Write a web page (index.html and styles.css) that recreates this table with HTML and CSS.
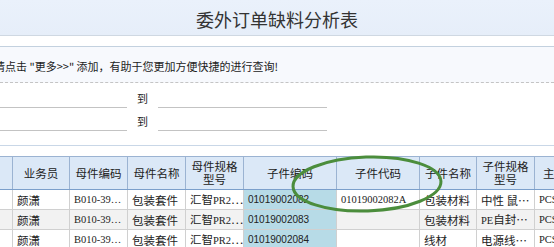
FILE: index.html
```html
<!DOCTYPE html>
<html>
<head>
<meta charset="utf-8">
<link rel="stylesheet" href="styles.css">
</head>
<body>
<div class="page">
  <header class="titlebar"><h1 class="title">委外订单缺料分析表</h1></header>
  <div class="gap"></div>
  <div class="hint"><span class="hint-text">请点击 "更多&gt;&gt;" 添加，有助于您更加方便快捷的进行查询!</span></div>
  <div class="filters">
    <div class="frow"><span class="inp"></span><span class="to">到</span><span class="inp inp-r"></span></div>
    <div class="frow"><span class="inp"></span><span class="to">到</span><span class="inp inp-r"></span></div>
  </div>
  <div class="grid-wrap">
    <table class="grid">
      <colgroup>
        <col style="width:52px"><col style="width:57px"><col style="width:58px"><col style="width:58px"><col style="width:58px"><col style="width:93px"><col style="width:83px"><col style="width:57px"><col style="width:58px"><col style="width:70px">
      </colgroup>
      <thead>
        <tr><th></th><th>业务员</th><th>母件编码</th><th>母件名称</th><th class="two"><span class="ln">母件规格</span><span class="ln">型号</span></th><th>子件编码</th><th>子件代码</th><th>子件名称</th><th class="two"><span class="ln">子件规格</span><span class="ln">型号</span></th><th class="cut">主计量</th></tr>
      </thead>
      <tbody>
        <tr><td></td><td>颜潇</td><td class="ser">B010-39…</td><td>包装套件</td><td>汇智<span class="ser">PR2</span>…</td><td class="hl">01019002082</td><td class="ser">01019002082A</td><td>包装材料</td><td>中性 鼠…</td><td class="ser">PCS</td></tr>
        <tr class="alt"><td></td><td>颜潇</td><td class="ser">B010-39…</td><td>包装套件</td><td>汇智<span class="ser">PR2</span>…</td><td class="hl">01019002083</td><td></td><td>包装材料</td><td><span class="ser">PE</span>自封…</td><td class="ser">PCS</td></tr>
        <tr><td></td><td>颜潇</td><td class="ser">B010-39…</td><td>包装套件</td><td>汇智<span class="ser">PR2</span>…</td><td class="hl">01019002084</td><td></td><td>线材</td><td>电源线…</td><td class="ser">PCS</td></tr>
      </tbody>
    </table>
    <svg class="circle" width="160" height="64" viewBox="0 0 160 64"><ellipse cx="80" cy="32" rx="74" ry="27" fill="none" stroke="#4b8d3c" stroke-width="3" transform="rotate(-2 80 32)"/></svg>
  </div>
</div>
</body>
</html>
```
FILE: styles.css
```css
html, body { margin: 0; padding: 0; background: #fff; overflow: hidden; }
body { font-family: "Noto Sans CJK SC", "Noto Sans", sans-serif; color: #222; width: 554px; height: 247px; }
.page { width: 554px; overflow: hidden; }
.titlebar { height: 35px; background: linear-gradient(#eaf1fb, #e6eef9); border-bottom: 1px solid #cfd8e2; display: flex; align-items: center; justify-content: center; }
.title { margin: 0; font-size: 18px; font-weight: normal; color: #333; line-height: 1; padding-top: 2px; }
.gap { height: 10px; border-bottom: 1px solid #c3d1df; }
.hint { height: 35px; background: #f7f9fd; border-bottom: 1px dashed #c4c4c4; display: flex; align-items: center; overflow: hidden; }
.hint-text { font-size: 11px; margin-left: -6px; white-space: nowrap; color: #222; padding-top: 2px; }
.filters { height: 63px; border-bottom: 1px solid #c9d7e7; padding-top: 3px; box-sizing: border-box; }
.frow { height: 23px; display: flex; align-items: flex-end; }
.inp { width: 127px; height: 1px; background: #c3c3c3; margin-bottom: 1px; }
.inp-r { width: 169px; }
.to { width: 31px; text-align: center; font-size: 11px; line-height: 14px; margin-bottom: 4px; }
.grid-wrap { position: relative; margin-top: 10px; }
.grid { border-collapse: collapse; table-layout: fixed; margin-left: -40px; width: 644px; }
.grid th { height: 32px; background: #dbe8f7; border: 1px solid #9bb3d2; border-bottom-color: #7b9fcb; font-weight: normal; font-size: 11.5px; color: #222; padding: 0; text-align: center; line-height: 14px; white-space: nowrap; overflow: hidden; }
.grid th .ln { display: block; line-height: 13px; height: 13px; }
.grid th.cut { text-align: left; padding-left: 8px; }
.grid td { height: 19px; border: 1px solid #d0d0d0; font-size: 11.5px; padding: 0 0 0 4px; white-space: nowrap; overflow: hidden; text-overflow: clip; color: #222; line-height: 14px; }
.grid td .ser, .grid td.ser { font-family: "Liberation Serif", "Noto Sans CJK SC", serif; font-size: 10.5px; }
.grid td.hl { background: #b7dbe7; font-family: "Liberation Sans", sans-serif; font-size: 10px; }
.grid tr.alt td { background: #f2f2f2; }
.grid tr.alt td.hl { background: #b7dbe7; }
.circle { position: absolute; left: 287px; top: -4px; pointer-events: none; }
```
